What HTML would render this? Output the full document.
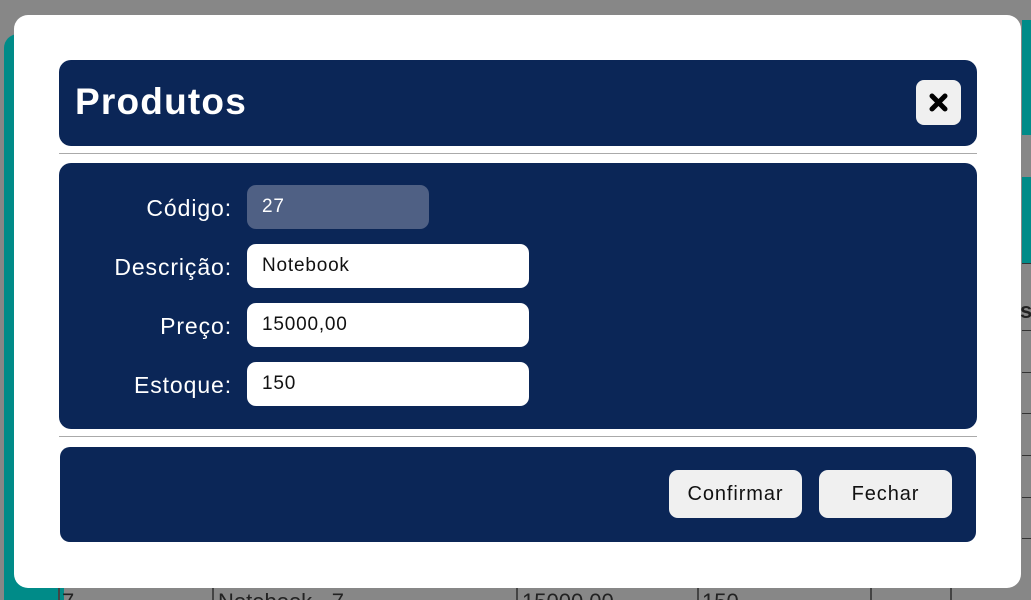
<!DOCTYPE html>
<html style="width:1031px;height:600px;overflow:hidden"><head><meta charset="utf-8"><style>
*{box-sizing:border-box;margin:0;padding:0}
body{width:1031px;height:600px;background:#878787;position:relative;overflow:hidden;font-family:"Liberation Sans",sans-serif}
.abs{position:absolute}
.navy{background:#0b2657}
.lbl{position:absolute;right:799px;color:#fff;font-size:23px;letter-spacing:0.9px;text-align:right}
.inp{position:absolute;left:247px;width:282px;height:44px;background:#fff;border-radius:9px;font-size:19px;letter-spacing:0.8px;padding-left:15px;line-height:44px;color:#111}
.btn{position:absolute;top:470px;width:133px;height:48px;background:#f0f0f0;border-radius:9px;font-size:20px;letter-spacing:0.9px;text-align:center;line-height:48px;color:#111}
.bg{color:#222;font-size:22px;line-height:22px}
</style></head><body>
<div class="abs" style="left:4px;top:34px;width:60px;height:566px;background:#008b88;border-radius:14px 0 0 0"></div>
<div class="abs" style="left:1022px;top:20px;width:9px;height:115px;background:#008b88"></div>
<div class="abs" style="left:1022px;top:177px;width:9px;height:86px;background:#008b88"></div>
<div class="abs" style="left:1022px;top:263px;width:9px;height:1px;background:#333"></div>
<div class="abs bg" style="left:1020px;top:300px;font-weight:bold">s</div>
<div class="abs" style="left:1022px;top:330px;width:9px;height:1px;background:#333"></div>
<div class="abs" style="left:1022px;top:372px;width:9px;height:1px;background:#333"></div>
<div class="abs" style="left:1022px;top:413px;width:9px;height:1px;background:#333"></div>
<div class="abs" style="left:1022px;top:455px;width:9px;height:1px;background:#333"></div>
<div class="abs" style="left:1022px;top:497px;width:9px;height:1px;background:#333"></div>
<div class="abs" style="left:1022px;top:538px;width:9px;height:1px;background:#333"></div>
<div class="abs" style="left:58px;top:588px;width:2px;height:12px;background:#444"></div>
<div class="abs" style="left:212px;top:588px;width:2px;height:12px;background:#444"></div>
<div class="abs" style="left:516px;top:588px;width:2px;height:12px;background:#444"></div>
<div class="abs" style="left:697px;top:588px;width:2px;height:12px;background:#444"></div>
<div class="abs" style="left:870px;top:588px;width:2px;height:12px;background:#444"></div>
<div class="abs" style="left:950px;top:588px;width:2px;height:12px;background:#444"></div>
<div class="abs bg" style="left:62px;top:591px">7</div>
<div class="abs bg" style="left:218px;top:591px">Notebook - 7</div>
<div class="abs bg" style="left:522px;top:591px">15000,00</div>
<div class="abs bg" style="left:702px;top:591px">150</div>
<div class="abs" style="left:14px;top:15px;width:1007px;height:573px;background:#fff;border-radius:14px"></div>
<div class="abs navy" style="left:59px;top:60px;width:918px;height:86px;border-radius:12px"></div>
<div class="abs" style="left:75px;top:81px;color:#fff;font-size:37px;font-weight:bold;letter-spacing:1.2px">Produtos</div>
<div class="abs" style="left:916px;top:80px;width:45px;height:45px;background:#f0f0f0;border-radius:8px"></div>
<svg class="abs" style="left:928px;top:92px" width="21" height="21" viewBox="0 0 21 21"><path d="M4 4L17 17M17 4L4 17" stroke="#000" stroke-width="5" stroke-linecap="round"/></svg>
<div class="abs" style="left:59px;top:153px;width:918px;height:1px;background:#aaa"></div>
<div class="abs navy" style="left:59px;top:163px;width:918px;height:266px;border-radius:12px"></div>
<div class="lbl" style="top:195px">Código:</div>
<div class="lbl" style="top:254px">Descrição:</div>
<div class="lbl" style="top:313px">Preço:</div>
<div class="lbl" style="top:372px">Estoque:</div>
<div class="inp" style="top:185px;width:182px;background:#4f6084;color:#fff">27</div>
<div class="inp" style="top:244px">Notebook</div>
<div class="inp" style="top:303px">15000,00</div>
<div class="inp" style="top:362px">150</div>
<div class="abs" style="left:59px;top:436px;width:918px;height:1px;background:#aaa"></div>
<div class="abs navy" style="left:60px;top:447px;width:916px;height:95px;border-radius:10px"></div>
<div class="btn" style="left:669px">Confirmar</div>
<div class="btn" style="left:819px">Fechar</div>
</body></html>
